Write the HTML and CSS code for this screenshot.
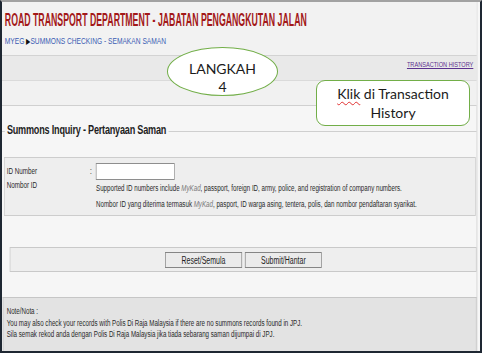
FILE: index.html
```html
<!DOCTYPE html>
<html lang="en">
<head>
    <meta charset="UTF-8">
    <meta name="viewport" content="width=device-width, initial-scale=1.0">
    <title>Summons Checking</title>
    <link rel="stylesheet" href="styles.css">
</head>
<body>
    <div class="frame">
        <div class="shot">
            <div class="page">
                <header class="top">
                    <h1 class="title"><span>ROAD TRANSPORT DEPARTMENT - JABATAN PENGANGKUTAN JALAN</span></h1>
                    <div class="crumbs"><a href="#">MYEG</a> <span class="sep">&#9654;</span><a href="#">SUMMONS CHECKING - SEMAKAN SAMAN</a></div>
                </header>

                <div class="toolbar"><a href="#" class="history">TRANSACTION HISTORY</a></div>
                <div class="subbar"></div>

                <section class="inquiry">
                    <div class="legend">
                        <h2>Summons Inquiry - Pertanyaan Saman</h2>
                        <span class="rule"></span>
                    </div>

                    <div class="form-box">
                        <div class="labels">
                            <div>ID Number</div>
                            <div>Nombor ID</div>
                        </div>
                        <div class="colon">:</div>
                        <div class="field">
                            <input type="text">
                            <p>Supported ID numbers include <em>MyKad</em>, passport, foreign ID, army, police, and registration of company numbers.</p>
                            <p>Nombor ID yang diterima termasuk <em>MyKad</em>, pasport, ID warga asing, tentera, polis, dan nombor pendaftaran syarikat.</p>
                        </div>
                    </div>

                    <div class="actions">
                        <button type="reset">Reset/Semula</button>
                        <button type="submit">Submit/Hantar</button>
                    </div>

                    <div class="note">
                        <p>Note/Nota :</p>
                        <p>You may also check your records with Polis Di Raja Malaysia if there are no summons records found in JPJ.</p>
                        <p>Sila semak rekod anda dengan Polis Di Raja Malaysia jika tiada sebarang saman dijumpai di JPJ.</p>
                    </div>
                </section>
            </div>
        </div>

        <!-- annotation shapes drawn over the screenshot -->
        <div class="callout step">LANGKAH<br>4</div>
        <div class="callout tip"><span class="typo">Klik</span> di Transaction<br>History</div>
    </div>
</body>
</html>
```

FILE: styles.css
```css
body {
    margin: 0;
    background: #fff;
}

.frame {
    position: relative;
    width: 482px;
    height: 353px;
    box-sizing: border-box;
    border: 2px solid #1e2732;
    border-top-color: #a2a2a2;
    background: #f7f7f7;
    overflow: hidden;
    font-family: "Liberation Sans", Arial, sans-serif;
}

/* the captured page is squeezed sideways */
.shot {
    width: 683px;
    transform: scaleX(0.7);
    transform-origin: 0 0;
}

.page {
    width: 679px;
    min-height: 349px;
    box-sizing: border-box;
    border-right: 1.4px solid #cdcdcd;
    background: #f6f6f6;
}

.top {
    height: 53px;
    box-sizing: border-box;
    padding: 8px 0 0 4px;
    background: #f2f2f2;
}

.title {
    margin: 0;
    font-size: 17.5px;
    line-height: 20px;
    font-weight: bold;
    color: #a31818;
    white-space: nowrap;
}

.title span {
    display: inline-block;
    transform: scaleX(0.715);
    transform-origin: 0 50%;
}

.crumbs {
    margin-top: 4.5px;
    font-size: 9.5px;
    line-height: 12px;
    white-space: nowrap;
}

.crumbs a {
    color: #3b5db3;
    text-decoration: none;
}

.crumbs .sep {
    color: #111;
    font-size: 8px;
}

.toolbar {
    height: 25px;
    box-sizing: border-box;
    border-top: 1px solid #d3d3d3;
    background: #e9e9e9;
    padding: 4px 4.7px 0 0;
    text-align: right;
    font-size: 8px;
    line-height: 10px;
}

.history {
    color: #5b318f;
    text-decoration: underline;
}

.subbar {
    height: 26px;
    box-sizing: border-box;
    border-top: 1px solid #dadada;
    border-bottom: 1px solid #d0d0d0;
    background: #f1f1f1;
}

.inquiry {
    padding-top: 15px;
}

.legend {
    display: flex;
    align-items: center;
    height: 18px;
}

.legend::before {
    content: "";
    width: 4px;
    margin: 2px 3px 0 0;
    border-top: 1px solid #cfcfcf;
}

.legend h2 {
    margin: 0;
    font-size: 13px;
    line-height: 18px;
    letter-spacing: -0.3px;
    color: #1e1e1e;
    white-space: nowrap;
}

.rule {
    flex: 1;
    margin: 2px 0 0 4px;
    border-top: 1px solid #cfcfcf;
}

.form-box {
    display: grid;
    grid-template-columns: 119px 8.6px 1fr;
    width: 674px;
    height: 59px;
    box-sizing: border-box;
    margin: 18px 0 0 2.9px;
    padding-left: 2.8px;
    border: 1px solid #cdcdcd;
    border-width: 1px 1.4px;
    background: #eee;
}

.labels,
.colon {
    padding-top: 6px;
    font-size: 9px;
    line-height: 14px;
    color: #2a2a2a;
}

.field {
    padding-top: 5px;
}

.field input {
    display: block;
    width: 113px;
    height: 17px;
    box-sizing: border-box;
    margin: 0;
    padding: 0;
    border: 1px solid #8e8e8e;
    border-width: 1px 1.4px;
    background: #fff;
}

.field p {
    margin: 0;
    font-size: 8.85px;
    line-height: 16px;
    color: #2a2a2a;
    white-space: nowrap;
}

.field em {
    color: #777;
}

.actions {
    display: flex;
    justify-content: center;
    gap: 4.3px;
    width: 667px;
    height: 25px;
    box-sizing: border-box;
    margin: 31px 0 0 11.4px;
    padding-top: 4px;
    border: 1px solid #c9c9c9;
    border-width: 1px 1.4px;
    background: #eee;
}

.actions button {
    width: 110px;
    height: 16px;
    padding: 0;
    font-family: "Liberation Sans", Arial, sans-serif;
    font-size: 10px;
    color: #1e1e1e;
    background: #ebebeb;
    border: 1px solid #858585;
    border-width: 1px 1.4px;
}

.note {
    width: 677px;
    min-height: 60px;
    box-sizing: border-box;
    margin: 25px 0 0 1.4px;
    padding: 7.8px 0 0 4.3px;
    border: 1px solid #c6c6c6;
    border-width: 1px 1.4px 0;
    background: #e3e3e3;
}

.note p {
    margin: 0;
    font-size: 8.85px;
    line-height: 11.7px;
    color: #2a2a2a;
    white-space: nowrap;
}

.callout {
    position: absolute;
    box-sizing: border-box;
    background: #fff;
    border: 1.3px solid #72ae48;
    font-family: Lato, "Open Sans", sans-serif;
    font-size: 14px;
    color: #1b1b1b;
    text-align: center;
}

.step {
    left: 165px;
    top: 45px;
    width: 111px;
    height: 49px;
    padding-top: 12.3px;
    border-radius: 50%;
    line-height: 18px;
}

.tip {
    left: 314px;
    top: 78px;
    width: 154px;
    height: 46px;
    padding-top: 3px;
    border-radius: 9px;
    line-height: 19px;
}

.typo {
    text-decoration: underline wavy #e03030;
    text-decoration-thickness: 1px;
    text-underline-offset: 2px;
}
```
